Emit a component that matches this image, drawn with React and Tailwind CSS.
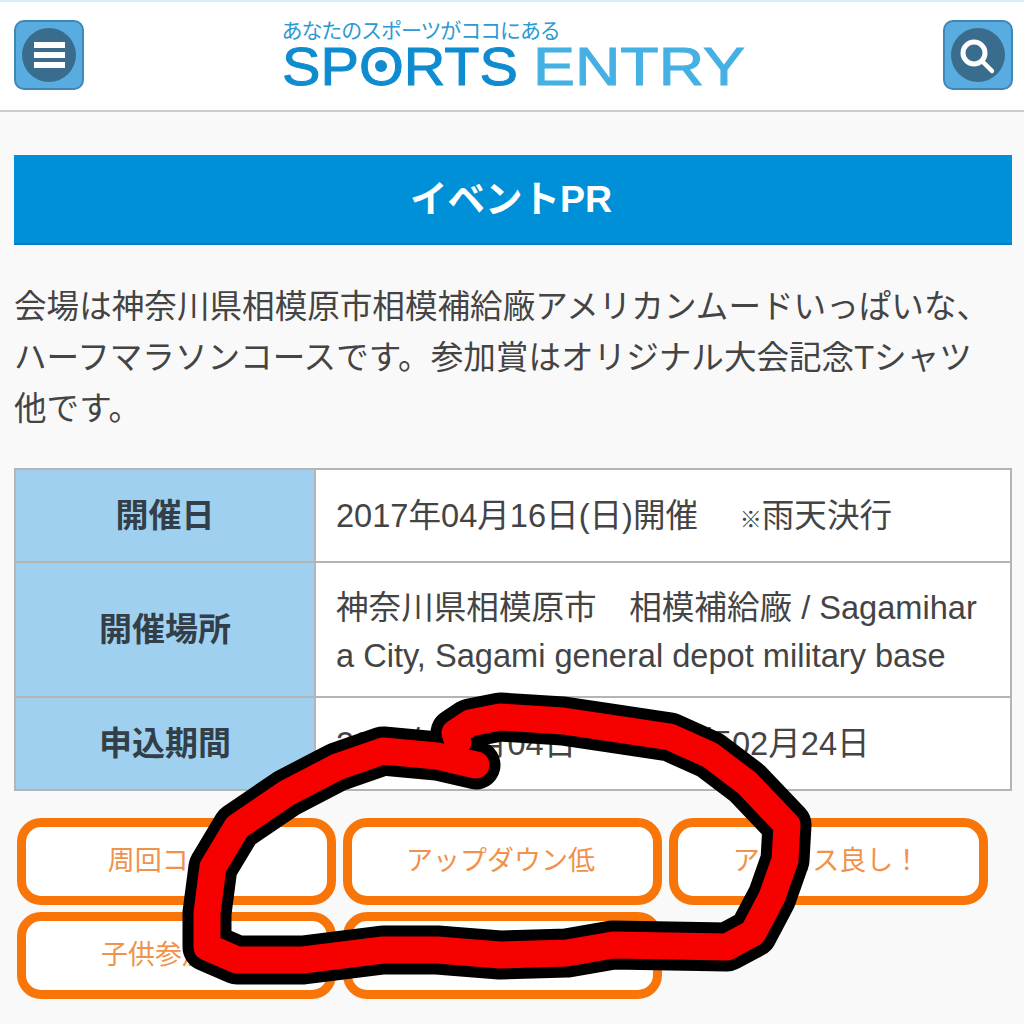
const jpFont = "font-['Liberation_Sans','Noto_Sans_CJK_JP',sans-serif]";

function IconButton({ children }) {
  return (
    <div className="flex h-[70px] w-[70px] items-center justify-center rounded-[10px] border-2 border-[#3f87b5] bg-[#58ace0]">
      <div className="flex h-[54px] w-[54px] items-center justify-center rounded-full bg-[#3a6c8e]">
        {children}
      </div>
    </div>
  );
}

function Logo() {
  return (
    <div className="flex w-[464px] flex-col">
      <div className="h-[27px] whitespace-nowrap text-[21px] leading-[23px] tracking-[-1.1px] text-[#2d9ad3]">
        あなたのスポーツがココにある
      </div>
      <svg className="overflow-visible" width="464" height="46" viewBox="0 0 464 46">
        <text
          x="0"
          y="39"
          fontFamily="Liberation Sans"
          fontSize="54"
          textLength="236"
          lengthAdjust="spacingAndGlyphs"
          fill="#0e8ccf"
          stroke="#0e8ccf"
          strokeWidth="1"
        >
          SPORTS
        </text>
        <circle cx="99" cy="20" r="6" fill="#0e8ccf" />
        <text
          x="251"
          y="39"
          fontFamily="Liberation Sans"
          fontSize="54"
          textLength="212"
          lengthAdjust="spacingAndGlyphs"
          fill="#45b0e4"
          stroke="#45b0e4"
          strokeWidth="1"
        >
          ENTRY
        </text>
      </svg>
    </div>
  );
}

function Tag({ label }) {
  return (
    <div className="flex h-[87px] w-[319px] items-center justify-center rounded-[24px] border-[9px] border-[#f97508] bg-white pb-[1px] pr-[4px] text-[27px] text-[#f0924c]">
      {label}
    </div>
  );
}

const thClass = "w-[300px] border-2 border-[#b4b4b4] bg-[#a0d0ef] text-center text-[33px] font-bold text-[#333f48]";
const tdClass = "border-2 border-[#b4b4b4] bg-white px-[20px] text-[32.6px] leading-[48px] text-[#444]";

const scribble =
  "M476 765 L437 756 L383 751 L337 767 L287 793 L237 827 L213 867 L207 913 L207 947 L237 960 L303 960 L343 955 L383 950 L437 950 L500 955 L567 953 L613 945 L727 947 L753 933 L772 897 L785 860 L787 825 L747 783 L710 755 L670 737 L610 728 L563 721 L500 717 L470 723 L455 733 L458 742";

export default function App() {
  return (
    <div className={`relative h-[1024px] w-full overflow-hidden bg-[#f9f9f9] ${jpFont}`}>
      <header className="flex h-[112px] items-center justify-between border-t-2 border-b-2 border-t-[#d8eefa] border-b-[#cccccc] bg-white px-[11px] pb-[2px]">
        <div className="ml-[3px]">
          <IconButton>
            <div className="flex flex-col gap-[4px]">
              <div className="h-[6px] w-[31px] bg-white" />
              <div className="h-[6px] w-[31px] bg-white" />
              <div className="h-[6px] w-[31px] bg-white" />
            </div>
          </IconButton>
        </div>
        <Logo />
        <IconButton>
          <svg width="40" height="40" viewBox="0 0 40 40" fill="none" stroke="#fff" strokeLinecap="round">
            <circle cx="16" cy="18" r="11" strokeWidth="5" />
            <path d="M25 27 L34 36" strokeWidth="4.5" />
          </svg>
        </IconButton>
      </header>

      <main className="pl-[14px] pr-[12px] pt-[43px]">
        <h2 className="flex h-[90px] items-center justify-center border-b-2 border-[#0a7cc0] bg-[#0090d8] pr-[4px] text-[37.5px] font-bold text-white">
          イベントPR
        </h2>

        <p className="mt-[36px] whitespace-nowrap text-[32.6px] leading-[51px] text-[#444]">
          会場は神奈川県相模原市相模補給廠アメリカンムードいっぱいな、
          <br />
          ハーフマラソンコースです。参加賞はオリジナル大会記念Tシャツ
          <br />
          他です。
        </p>

        <table className="mt-[34px] w-[998px] border-collapse">
          <tbody>
            <tr className="h-[93px]">
              <th className={thClass}>開催日</th>
              <td className={`${tdClass} pt-[5px]`}>
                2017年04月16日(日)開催　 <span className="text-[22px]">※</span>雨天決行
              </td>
            </tr>
            <tr className="h-[135px]">
              <th className={thClass}>開催場所</th>
              <td className={`${tdClass} break-all pt-[5px]`}>
                神奈川県相模原市　相模補給廠 / Sagamihara City, Sagami general depot military base
              </td>
            </tr>
            <tr className="h-[93px]">
              <th className={thClass}>申込期間</th>
              <td className={tdClass}>2016年11月04日 〜 2017年02月24日</td>
            </tr>
          </tbody>
        </table>

        <div className="mt-[27px] ml-[3px] flex w-[980px] flex-wrap gap-x-[7px] gap-y-[7px]">
          <Tag label="周回コース" />
          <Tag label="アップダウン低" />
          <Tag label="アクセス良し！" />
          <Tag label="子供参加OK" />
          <Tag label="" />
        </div>
      </main>

      {/* hand drawn scribble over the screenshot */}
      <svg className="absolute inset-0" width="1024" height="1024" viewBox="0 0 1024 1024" fill="none" strokeLinecap="round" strokeLinejoin="round">
        <path d={scribble} stroke="#000" strokeWidth="49" />
        <path d={scribble} stroke="#f60000" strokeWidth="27" />
      </svg>
    </div>
  );
}
